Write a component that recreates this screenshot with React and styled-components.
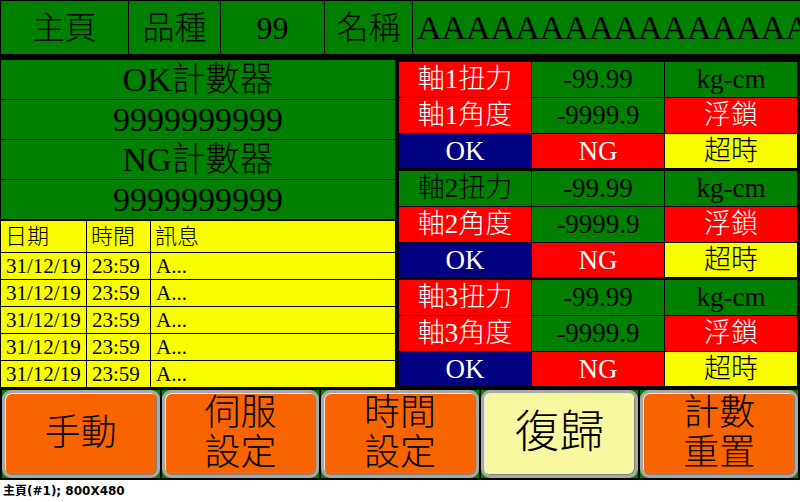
import React from "react";
import styled, { createGlobalStyle } from "styled-components";

const GlobalStyle = createGlobalStyle`
  html, body { margin: 0; padding: 0; background: #ffffff; }
  body { font-family: "Liberation Serif", "Noto Sans CJK TC", serif; }
`;

const C = {
  green: "#008000",
  red: "#ff0000",
  blue: "#000080",
  yellow: "#f8fc00",
  orange: "#f86400",
  pale: "#f8f8a0",
  white: "#ffffff",
  black: "#000000",
};

const SERIF = `"Liberation Serif", "Noto Sans CJK TC", serif`;

const Screen = styled.div`
  width: 800px;
  height: 480px;
  background: ${C.black};
  display: flex;
  flex-direction: column;
  overflow: hidden;
`;

const TopBar = styled.div`
  display: flex;
  gap: 1px;
  height: 53px;
  margin: 1px 0 0 1px;
`;

const TopCell = styled.div`
  flex: ${(p) => (p.$w ? `0 0 ${p.$w}px` : "1 1 auto")};
  min-width: 0;
  background: ${C.green};
  color: ${C.black};
  display: flex;
  align-items: center;
  justify-content: ${(p) => (p.$left ? "flex-start" : "center")};
  padding-left: ${(p) => (p.$left ? "4px" : "0")};
  font-family: ${SERIF};
  font-size: ${(p) => (p.$left ? "34px" : "32px")};
  font-weight: 300;
  line-height: 1;
  white-space: nowrap;
  overflow: hidden;
`;

const Main = styled.div`
  display: flex;
  gap: 4px;
  margin-top: 6px;
  padding-left: 1px;
  height: 327px;
`;

const LeftPanel = styled.div`
  width: 394px;
  display: flex;
  flex-direction: column;
  gap: 1px;
`;

const CounterRow = styled.div`
  height: 39px;
  background: ${C.green};
  color: ${C.black};
  display: flex;
  align-items: center;
  justify-content: center;
  font-family: ${SERIF};
  font-size: 34px;
  font-weight: 300;
  line-height: 1;
`;

const LogTable = styled.div`
  display: grid;
  grid-template-columns: 85px 63px 1fr;
  grid-template-rows: 31px repeat(5, 26px);
  gap: 1px;
  margin-top: 1px;
`;

const LogCell = styled.div`
  background: ${C.yellow};
  color: ${C.black};
  display: flex;
  align-items: center;
  padding-left: ${(p) => (p.$head ? "4px" : "5px")};
  font-family: ${SERIF};
  font-size: ${(p) => (p.$head ? "22px" : "21px")};
  font-weight: 300;
  line-height: 1;
  white-space: nowrap;
  overflow: hidden;
`;

const RightPanel = styled.div`
  width: 398px;
  margin-top: 2px;
  display: flex;
  flex-direction: column;
  gap: 3px;
`;

const AxisGroup = styled.div`
  display: grid;
  grid-template-columns: repeat(3, 132px);
  grid-template-rows: 35px 35px 34px;
  gap: 1px;
`;

const AxisCell = styled.div`
  background: ${(p) => p.$bg};
  color: ${(p) => p.$fg};
  display: flex;
  align-items: center;
  justify-content: center;
  font-family: ${SERIF};
  font-size: 27px;
  font-weight: 300;
  line-height: 1;
  white-space: nowrap;
`;

const ButtonBar = styled.div`
  display: grid;
  grid-template-columns: repeat(5, 1fr);
  gap: 2px;
  padding: 0 2px;
  margin-top: 3px;
  height: 87px;
`;

const ButtonCell = styled.div`
  background: ${C.green};
  display: flex;
`;

const Btn = styled.div`
  flex: 1;
  box-sizing: border-box;
  border: 3px solid #a8a8a8;
  border-radius: 9px;
  box-shadow: inset 1px 1px 0 #e8e8e8, inset -1px -1px 0 #808080;
  background: ${(p) => (p.$light ? C.pale : C.orange)};
  color: ${C.black};
  display: flex;
  flex-direction: column;
  align-items: center;
  justify-content: center;
  font-family: ${SERIF};
  font-size: ${(p) => (p.$big ? "45px" : "36px")};
  font-weight: 300;
  line-height: 40px;
  padding-bottom: 2px;
`;

const Caption = styled.div`
  padding: 4px 0 0 3px;
  height: 18px;
  font-family: "DejaVu Sans", "Noto Sans CJK TC", sans-serif;
  font-weight: bold;
  font-size: 12px;
  line-height: 14px;
  color: ${C.black};
`;

const groups = [
  { n: 1, torqueBg: C.red, torqueFg: C.white },
  { n: 2, torqueBg: C.green, torqueFg: C.black },
  { n: 3, torqueBg: C.red, torqueFg: C.white },
];

const logs = Array.from({ length: 5 }, () => ["31/12/19", "23:59", "A..."]);

const buttons = [
  { lines: ["手動"] },
  { lines: ["伺服", "設定"] },
  { lines: ["時間", "設定"] },
  { lines: ["復歸"], light: true, big: true },
  { lines: ["計數", "重置"] },
];

export default function App() {
  return (
    <>
      <GlobalStyle />
      <Screen>
        <TopBar>
          <TopCell $w={127}>主頁</TopCell>
          <TopCell $w={91}>品種</TopCell>
          <TopCell $w={103}>99</TopCell>
          <TopCell $w={87}>名稱</TopCell>
          <TopCell $left>AAAAAAAAAAAAAAAAAAAA</TopCell>
        </TopBar>
        <Main>
          <LeftPanel>
            <CounterRow>OK計數器</CounterRow>
            <CounterRow>9999999999</CounterRow>
            <CounterRow>NG計數器</CounterRow>
            <CounterRow>9999999999</CounterRow>
            <LogTable>
              <LogCell $head>日期</LogCell>
              <LogCell $head>時間</LogCell>
              <LogCell $head>訊息</LogCell>
              {logs.map((row, i) =>
                row.map((v, j) => <LogCell key={`${i}-${j}`}>{v}</LogCell>)
              )}
            </LogTable>
          </LeftPanel>
          <RightPanel>
            {groups.map((g) => (
              <AxisGroup key={g.n}>
                <AxisCell $bg={g.torqueBg} $fg={g.torqueFg}>
                  軸{g.n}扭力
                </AxisCell>
                <AxisCell $bg={C.green} $fg={C.black}>-99.99</AxisCell>
                <AxisCell $bg={C.green} $fg={C.black}>kg-cm</AxisCell>
                <AxisCell $bg={C.red} $fg={C.white}>
                  軸{g.n}角度
                </AxisCell>
                <AxisCell $bg={C.green} $fg={C.black}>-9999.9</AxisCell>
                <AxisCell $bg={C.red} $fg={C.white}>浮鎖</AxisCell>
                <AxisCell $bg={C.blue} $fg={C.white}>OK</AxisCell>
                <AxisCell $bg={C.red} $fg={C.white}>NG</AxisCell>
                <AxisCell $bg={C.yellow} $fg={C.black}>超時</AxisCell>
              </AxisGroup>
            ))}
          </RightPanel>
        </Main>
        <ButtonBar>
          {buttons.map((b, i) => (
            <ButtonCell key={i}>
              <Btn $light={b.light} $big={b.big}>
                {b.lines.map((l) => (
                  <span key={l}>{l}</span>
                ))}
              </Btn>
            </ButtonCell>
          ))}
        </ButtonBar>
      </Screen>
      <Caption>主頁(#1); 800X480</Caption>
    </>
  );
}
